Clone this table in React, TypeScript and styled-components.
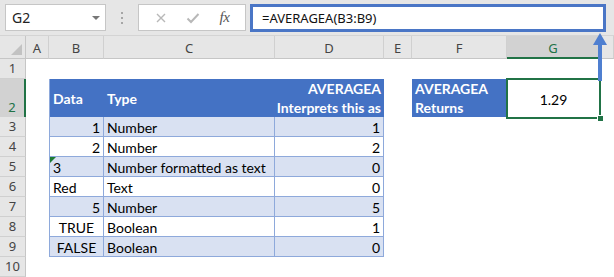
import React from "react";
import styled, { createGlobalStyle } from "styled-components";

const GlobalStyle = createGlobalStyle`
  html, body {
    margin: 0;
    padding: 0;
    background: #ffffff;
  }
  body {
    font-family: Lato, "Liberation Sans", sans-serif;
  }
`;

// row header, A .. G, and the sliver of H
const COLS = "26px 23px 55px 171px 109px 28px 95px 93px 14px";

const UI_FONT = `"Noto Sans", "Open Sans", sans-serif`;
const CELL_FONT = `Lato, "Liberation Sans", sans-serif`;

const TABLE_LINE = "#8ea9db";
const HEAD_BLUE = "#4472c4";
const BAND_BLUE = "#d9e1f2";
const EXCEL_GREEN = "#217346";

const Window = styled.div`
  position: relative;
  width: 614px;
  height: 277px;
  overflow: hidden;
  background: #ffffff;
`;

/* ---------- formula bar ---------- */

const FormulaBar = styled.div`
  display: flex;
  align-items: flex-start;
  height: 36px;
  box-sizing: border-box;
  padding: 4px 0 0 5px;
  background: #e6e6e6;
  border-bottom: 1px solid #d4d4d4;
`;

const NameBox = styled.div`
  display: flex;
  align-items: center;
  justify-content: space-between;
  width: 101px;
  height: 27px;
  box-sizing: border-box;
  padding: 0 5px 0 6px;
  background: #ffffff;
  border: 1px solid #c6c6c6;
  font: 14px ${UI_FONT};
  color: #222;
`;

const DropArrow = styled.span`
  width: 0;
  height: 0;
  border-left: 4px solid transparent;
  border-right: 4px solid transparent;
  border-top: 4px solid #777;
  margin-top: 1px;
`;

const Grip = styled.div`
  display: flex;
  flex-direction: column;
  align-items: center;
  justify-content: center;
  gap: 3px;
  width: 32px;
  height: 27px;
`;

const GripDot = styled.span`
  width: 2px;
  height: 2px;
  background: #a6a6a6;
`;

const FxGroup = styled.div`
  display: flex;
  align-items: center;
  justify-content: space-around;
  width: 108px;
  height: 27px;
  box-sizing: border-box;
  padding: 0 6px 0 6px;
  background: #ffffff;
  border: 1px solid #c6c6c6;
`;

const FxText = styled.span`
  font: italic 15px "Liberation Serif", serif;
  color: #555;
  letter-spacing: -0.5px;
`;

const FormulaInput = styled.div`
  display: flex;
  align-items: center;
  width: 356px;
  height: 28px;
  box-sizing: border-box;
  margin-left: 4px;
  padding-left: 9px;
  background: #ffffff;
  border: 3px solid #4a76c6;
  font: 13px ${UI_FONT};
  color: #111;
`;

/* ---------- sheet ---------- */

const Sheet = styled.div`
  display: flex;
  flex-direction: column;
`;

const SheetRow = styled.div<{ $h: number }>`
  display: grid;
  grid-template-columns: ${COLS};
  height: ${(p) => p.$h}px;
`;

const Corner = styled.div`
  position: relative;
  background: #e6e6e6;
  border-right: 1px solid #c6c6c6;
  border-bottom: 1px solid #c6c6c6;
  box-sizing: border-box;
  &::after {
    content: "";
    position: absolute;
    right: 3px;
    bottom: 3px;
    width: 0;
    height: 0;
    border-left: 11px solid transparent;
    border-bottom: 11px solid #c2c2c2;
  }
`;

const ColHead = styled.div<{ $active?: boolean }>`
  display: flex;
  align-items: center;
  justify-content: center;
  box-sizing: border-box;
  padding-top: 2px;
  background: ${(p) => (p.$active ? "#d2d2d2" : "#e6e6e6")};
  color: ${(p) => (p.$active ? EXCEL_GREEN : "#444")};
  border-right: 1px solid #d0d0d0;
  border-bottom: ${(p) => (p.$active ? `2px solid ${EXCEL_GREEN}` : "1px solid #c6c6c6")};
  font: 13px ${UI_FONT};
`;

const RowHead = styled.div<{ $active?: boolean }>`
  display: flex;
  align-items: flex-end;
  justify-content: center;
  box-sizing: border-box;
  padding-bottom: 1px;
  background: ${(p) => (p.$active ? "#d2d2d2" : "#e6e6e6")};
  color: ${(p) => (p.$active ? EXCEL_GREEN : "#444")};
  border-bottom: 1px solid #d0d0d0;
  border-right: ${(p) => (p.$active ? `2px solid ${EXCEL_GREEN}` : "1px solid #c6c6c6")};
  font: 13px/18px ${UI_FONT};
`;

type Fill = "none" | "head" | "band" | "plain";
type Align = "left" | "right" | "center";

const fillColor: Record<Fill, string> = {
  none: "#ffffff",
  head: HEAD_BLUE,
  band: BAND_BLUE,
  plain: "#ffffff",
};

const justify: Record<Align, string> = {
  left: "flex-start",
  right: "flex-end",
  center: "center",
};

const Cell = styled.div<{ $fill?: Fill; $align?: Align; $edge?: boolean }>`
  position: relative;
  display: flex;
  align-items: center;
  justify-content: ${(p) => justify[p.$align ?? "left"]};
  box-sizing: border-box;
  padding: 1px 3px 0 3px;
  white-space: nowrap;
  background: ${(p) => fillColor[p.$fill ?? "none"]};
  color: ${(p) => (p.$fill === "head" ? "#ffffff" : "#000000")};
  font: ${(p) => (p.$fill === "head" ? "bold " : "")}14px ${CELL_FONT};
  ${(p) =>
    p.$fill === "band" || p.$fill === "plain"
      ? `border-right: 1px solid ${TABLE_LINE}; border-bottom: 1px solid ${TABLE_LINE};`
      : ""}
  ${(p) => (p.$fill === "head" ? `border-bottom: 1px solid ${TABLE_LINE};` : "")}
  ${(p) => (p.$edge ? `border-left: 1px solid ${TABLE_LINE};` : "")}
`;

const StackCell = styled(Cell)`
  flex-direction: column;
  justify-content: center;
  align-items: ${(p) => justify[p.$align ?? "left"]};
  line-height: 19px;
  padding-top: 0;
`;

const TextFlag = styled(Cell)`
  &::before {
    content: "";
    position: absolute;
    left: 0;
    top: 0;
    width: 0;
    height: 0;
    border-top: 6px solid #1e7b34;
    border-right: 6px solid transparent;
  }
`;

const SelectedCell = styled(Cell)`
  z-index: 3;
  &::after {
    content: "";
    position: absolute;
    left: -1px;
    top: -1px;
    right: -1px;
    bottom: -1px;
    border: 2px solid ${EXCEL_GREEN};
    pointer-events: none;
  }
  &::before {
    content: "";
    position: absolute;
    right: -4px;
    bottom: -4px;
    width: 5px;
    height: 5px;
    background: ${EXCEL_GREEN};
    border: 1px solid #ffffff;
    z-index: 2;
  }
`;

const Arrow = styled.svg`
  position: absolute;
  left: 590px;
  top: 31px;
  z-index: 5;
`;

const XIcon = () => (
  <svg width="12" height="12" viewBox="0 0 12 12">
    <path d="M2 2 L10 10 M10 2 L2 10" stroke="#b8b8b8" strokeWidth="1.4" fill="none" />
  </svg>
);

const CheckIcon = () => (
  <svg width="14" height="12" viewBox="0 0 14 12">
    <path d="M1.5 6.5 L5 10 L12.5 2" stroke="#b8b8b8" strokeWidth="2" fill="none" />
  </svg>
);

type Row = {
  n: number;
  b: string;
  bAlign: Align;
  type: string;
  value: string;
  flag?: boolean;
};

const rows: Row[] = [
  { n: 3, b: "1", bAlign: "right", type: "Number", value: "1" },
  { n: 4, b: "2", bAlign: "right", type: "Number", value: "2" },
  { n: 5, b: "3", bAlign: "left", type: "Number formatted as text", value: "0", flag: true },
  { n: 6, b: "Red", bAlign: "left", type: "Text", value: "0" },
  { n: 7, b: "5", bAlign: "right", type: "Number", value: "5" },
  { n: 8, b: "TRUE", bAlign: "center", type: "Boolean", value: "1" },
  { n: 9, b: "FALSE", bAlign: "center", type: "Boolean", value: "0" },
];

const letters = ["A", "B", "C", "D", "E", "F", "G", ""];

const Blank = ({ count }: { count: number }) => (
  <>
    {Array.from({ length: count }, (_, i) => (
      <Cell key={i} />
    ))}
  </>
);

export default function App() {
  return (
    <Window>
      <GlobalStyle />
      <FormulaBar>
        <NameBox>
          G2
          <DropArrow />
        </NameBox>
        <Grip>
          <GripDot />
          <GripDot />
          <GripDot />
        </Grip>
        <FxGroup>
          <XIcon />
          <CheckIcon />
          <FxText>fx</FxText>
        </FxGroup>
        <FormulaInput>=AVERAGEA(B3:B9)</FormulaInput>
      </FormulaBar>

      <Sheet>
        <SheetRow $h={23}>
          <Corner />
          {letters.map((l, i) => (
            <ColHead key={i} $active={l === "G"}>
              {l}
            </ColHead>
          ))}
        </SheetRow>

        <SheetRow $h={20}>
          <RowHead>1</RowHead>
          <Blank count={8} />
        </SheetRow>

        <SheetRow $h={38}>
          <RowHead $active>2</RowHead>
          <Cell />
          <Cell $fill="head" $edge>
            Data
          </Cell>
          <Cell $fill="head">Type</Cell>
          <StackCell $fill="head" $align="right">
            <span>AVERAGEA</span>
            <span>Interprets this as</span>
          </StackCell>
          <Cell />
          <StackCell $fill="head">
            <span>AVERAGEA</span>
            <span>Returns</span>
          </StackCell>
          <SelectedCell $align="center">1.29</SelectedCell>
          <Cell />
        </SheetRow>

        {rows.map((r, i) => {
          const fill: Fill = i % 2 === 0 ? "band" : "plain";
          const DataCell = r.flag ? TextFlag : Cell;
          return (
            <SheetRow $h={20} key={r.n}>
              <RowHead>{r.n}</RowHead>
              <Cell />
              <DataCell $fill={fill} $align={r.bAlign} $edge>
                {r.b}
              </DataCell>
              <Cell $fill={fill}>{r.type}</Cell>
              <Cell $fill={fill} $align="right">
                {r.value}
              </Cell>
              <Blank count={4} />
            </SheetRow>
          );
        })}

        <SheetRow $h={20}>
          <RowHead>10</RowHead>
          <Blank count={8} />
        </SheetRow>
      </Sheet>

      <Arrow width="20" height="52" viewBox="0 0 20 52">
        <path d="M10 2 L17 14 L3 14 Z" fill="#4f7fd0" />
        <rect x="8" y="12" width="4" height="38" fill="#4f7fd0" />
      </Arrow>
    </Window>
  );
}
